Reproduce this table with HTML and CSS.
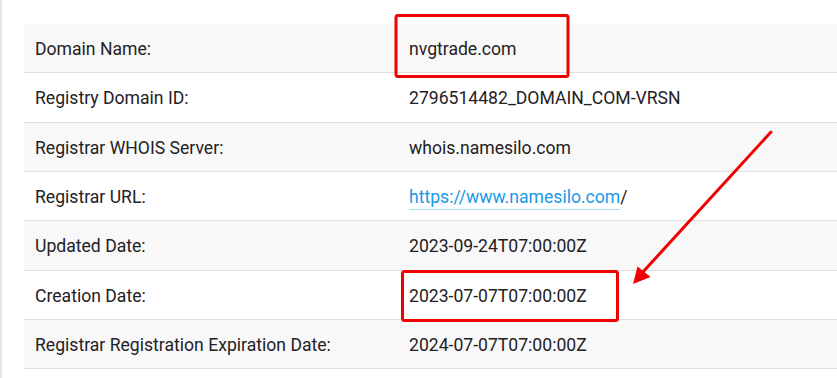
FILE: index.html
```html
<!DOCTYPE html>
<html>
<head>
<meta charset="utf-8">
<link rel="stylesheet" href="styles.css">
</head>
<body>
<div class="page">
  <div class="whois">
    <div class="row"><div class="label">Domain Name:</div><div class="value">nvgtrade.com</div></div>
    <div class="row"><div class="label">Registry Domain ID:</div><div class="value">2796514482_DOMAIN_COM-VRSN</div></div>
    <div class="row"><div class="label">Registrar WHOIS Server:</div><div class="value">whois.namesilo.com</div></div>
    <div class="row"><div class="label">Registrar URL:</div><div class="value"><a class="link" href="#">https://www.namesilo.com</a>/</div></div>
    <div class="row"><div class="label">Updated Date:</div><div class="value">2023-09-24T07:00:00Z</div></div>
    <div class="row"><div class="label">Creation Date:</div><div class="value">2023-07-07T07:00:00Z</div></div>
    <div class="row"><div class="label">Registrar Registration Expiration Date:</div><div class="value">2024-07-07T07:00:00Z</div></div>
  </div>
  <svg class="marks" width="837" height="378" viewBox="0 0 837 378">
    <rect x="396" y="15.5" width="172" height="61" rx="2" fill="none" stroke="#f00000" stroke-width="3"/>
    <rect x="402.5" y="271.5" width="215" height="49" rx="2" fill="none" stroke="#f00000" stroke-width="3"/>
    <line x1="771" y1="132" x2="642" y2="273" stroke="#f00000" stroke-width="3" stroke-linecap="round"/>
    <polygon points="633,284 637.5,266.5 650.5,277" fill="#f00000"/>
  </svg>
</div>
</body>
</html>
```
FILE: styles.css
```css
html, body {
  margin: 0;
  padding: 0;
  background: #ffffff;
}
.page {
  position: relative;
  width: 837px;
  height: 378px;
  box-sizing: border-box;
  border-left: 2px solid #e4e4e4;
  padding: 24px 0 0 22px;
  overflow: hidden;
  font-family: Roboto, "Liberation Sans", sans-serif;
  font-size: 17.6px;
  color: #1f2124;
}
.whois {
  display: flex;
  flex-direction: column;
}
.row {
  display: grid;
  grid-template-columns: 374px 1fr;
  height: 49.33px;
  box-sizing: border-box;
  border-bottom: 1px solid #dedede;
  align-items: center;
}
.row:nth-child(odd) {
  background: #f8f8f8;
}
.label,
.value {
  padding: 2px 0 0 11px;
}
.link {
  color: #1a98e6;
  text-decoration: none;
  border-bottom: 1px solid #a9dcf7;
  padding-bottom: 2px;
}
.marks {
  position: absolute;
  left: -2px;
  top: 0;
  pointer-events: none;
}
```
